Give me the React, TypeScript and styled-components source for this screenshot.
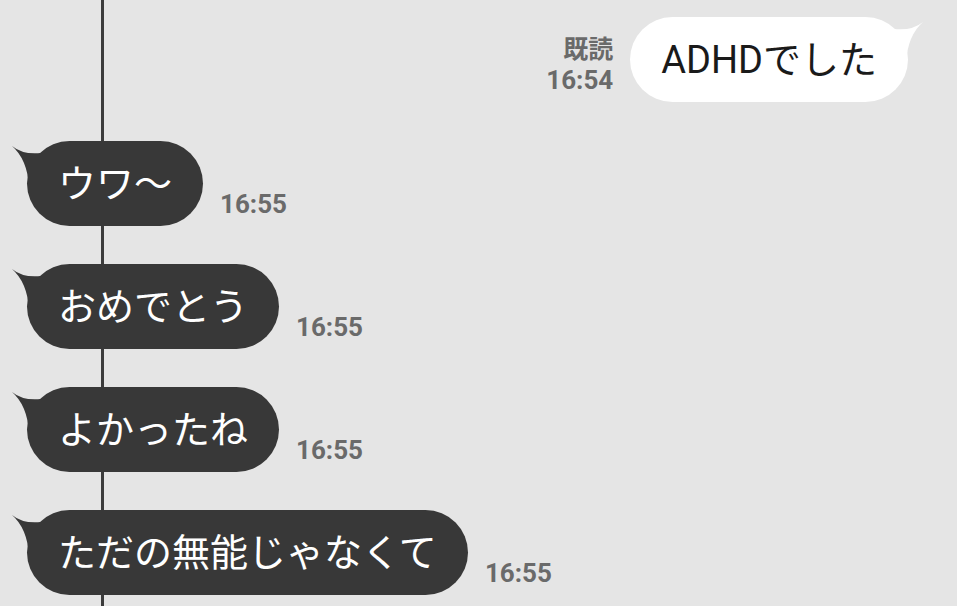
import styled, { createGlobalStyle } from 'styled-components';

const GlobalStyle = createGlobalStyle`
	html, body {
		margin: 0;
		padding: 0;
		background: #e5e5e5;
	}
	body {
		font-family: Roboto, 'Noto Sans CJK JP', sans-serif;
	}
`;

const Screen = styled.div`
	position: relative;
	width: 957px;
	height: 606px;
	overflow: hidden;
	background: #e5e5e5;
	display: flex;
	flex-direction: column;
	padding-top: 17px;
	box-sizing: border-box;
`;

/* 背景に引かれた縦線 */
const Line = styled.div`
	position: absolute;
	left: 101px;
	top: 0;
	bottom: 0;
	width: 3px;
	background: #3c3c3c;
`;

const Row = styled.div<{ $mine?: boolean }>`
	position: relative;
	display: flex;
	align-items: flex-end;
	gap: 17px;
	justify-content: ${(p) => (p.$mine ? 'flex-end' : 'flex-start')};
	padding: ${(p) => (p.$mine ? '0 49px 0 0' : '0 0 0 27px')};
	margin-bottom: ${(p) => (p.$mine ? '39px' : '38px')};
`;

const Bubble = styled.div<{ $mine?: boolean }>`
	position: relative;
	height: 85px;
	padding: 0 31px 0 31px;
	border-radius: 43px;
	display: flex;
	align-items: center;
	font-size: 38px;
	line-height: 1;
	white-space: nowrap;
	background: ${(p) => (p.$mine ? '#ffffff' : '#383838')};
	color: ${(p) => (p.$mine ? '#1a1a1a' : '#ffffff')};
`;

const Tail = styled.svg<{ $mine?: boolean }>`
	position: absolute;
	top: 0;
	width: 50px;
	height: 50px;
	${(p) => (p.$mine ? 'right: -16px; transform: scaleX(-1);' : 'left: -16px;')}
	fill: ${(p) => (p.$mine ? '#ffffff' : '#383838')};
`;

const Meta = styled.div`
	display: flex;
	flex-direction: column;
	align-items: flex-end;
	margin-bottom: 7px;
	color: #6a6a6a;
	font-weight: 700;
	font-size: 26px;
	line-height: 30px;
`;

const Read = styled.span`
	font-size: 25px;
`;

const messages = ['ウワ〜', 'おめでとう', 'よかったね', 'ただの無能じゃなくて'];

const BubbleTail = ({ mine }: { mine?: boolean }) => (
	<Tail $mine={mine} viewBox="0 0 50 50">
		<path d="M1 5 Q12 14 30 12 L40 12 L40 45 L18 45 Q16 18 1 5 Z" />
	</Tail>
);

const App = () => {
	return (
		<>
			<GlobalStyle />
			<Screen>
				<Line />
				<Row $mine>
					<Meta>
						<Read>既読</Read>
						<span>16:54</span>
					</Meta>
					<Bubble $mine>
						<BubbleTail mine />
						ADHDでした
					</Bubble>
				</Row>
				{messages.map((m, i) => (
					<Row key={i}>
						<Bubble>
							<BubbleTail />
							{m}
						</Bubble>
						<Meta>
							<span>16:55</span>
						</Meta>
					</Row>
				))}
			</Screen>
		</>
	);
};

export default App;
